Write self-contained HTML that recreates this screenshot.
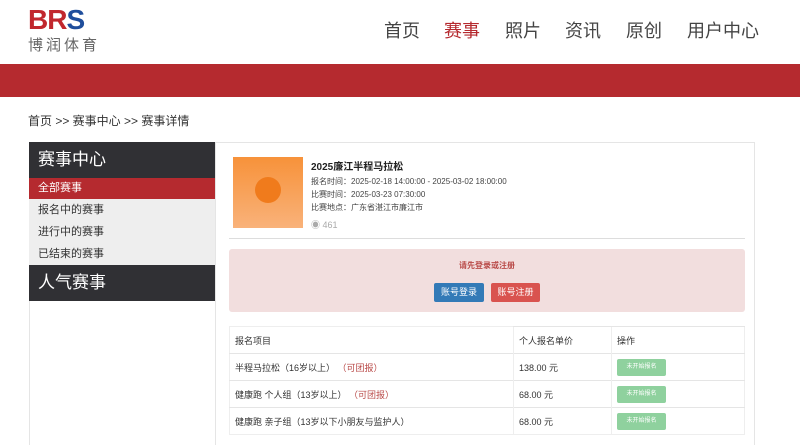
<!DOCTYPE html><html><head><meta charset="utf-8"><style>
*{margin:0;padding:0;box-sizing:border-box}
html{width:800px;height:445px;overflow:hidden}
body{width:800px;height:445px;overflow:hidden;background:#fff;font-family:"Liberation Sans","Noto Sans CJK SC",sans-serif;color:#333;position:relative}
.a{position:absolute}
.nav{font-size:18px;color:#444;top:17px}
.side div{position:absolute;left:29px;width:186px;font-size:11px;padding-left:9px}
td{font-size:9px;height:27px;border-top:1px solid #e5e5e5;padding-left:5px;color:#333}
.g{display:inline-block;background:#8fd19e;color:#fff;font-size:6px;width:49px;height:17px;line-height:17px;text-align:center;border-radius:2px;vertical-align:middle}
.r{color:#b94a48}
</style></head><body>
<div class="a" style="left:28px;top:6px;font-size:28px;font-weight:bold;letter-spacing:-1px;line-height:28px"><span style="color:#c1272d">BR</span><span style="color:#1f4e9c">S</span></div>
<div class="a" style="left:28px;top:34px;font-size:15px;color:#666;letter-spacing:3px">博润体育</div>
<div class="a nav" style="left:384px">首页</div>
<div class="a nav" style="left:444px;color:#b52a2f">赛事</div>
<div class="a nav" style="left:505px">照片</div>
<div class="a nav" style="left:565px">资讯</div>
<div class="a nav" style="left:626px">原创</div>
<div class="a nav" style="left:687px">用户中心</div>
<div class="a" style="left:0;top:64px;width:800px;height:33px;background:#b52a2f"></div>
<div class="a" style="left:28px;top:112px;font-size:12px">首页 &gt;&gt; 赛事中心 &gt;&gt; 赛事详情</div>
<div class="a" style="left:29px;top:142px;width:726px;height:303px;border:1px solid #e5e5e5;border-bottom:0"></div>
<div class="side">
<div style="top:142px;height:36px;background:#303034;color:#fff;font-size:17px;line-height:36px">赛事中心</div>
<div style="top:178px;height:21px;line-height:21px;background:#b52a2f;color:#fff">全部赛事</div>
<div style="top:199px;height:22px;line-height:22px;background:#eee">报名中的赛事</div>
<div style="top:221px;height:22px;line-height:22px;background:#eee">进行中的赛事</div>
<div style="top:243px;height:22px;line-height:22px;background:#eee">已结束的赛事</div>
<div style="top:265px;height:36px;background:#303034;color:#fff;font-size:17px;line-height:36px">人气赛事</div>
</div>
<div class="a" style="left:215px;top:142px;width:1px;height:303px;background:#e5e5e5"></div>
<div class="a" style="left:233px;top:157px;width:70px;height:71px;background:linear-gradient(#f7923a,#f9b27a)"><div class="a" style="left:22px;top:20px;width:26px;height:26px;border-radius:50%;background:#f07b1c"></div></div>
<div class="a" style="left:311px;top:158px;font-size:10px;font-weight:bold;color:#222">2025廉江半程马拉松</div>
<div class="a" style="left:311px;top:175px;font-size:8px;line-height:13px;color:#444">报名时间：2025-02-18 14:00:00 - 2025-03-02 18:00:00<br>比赛时间：2025-03-23 07:30:00<br>比赛地点：广东省湛江市廉江市</div>
<div class="a" style="left:311px;top:218px;font-size:9px;color:#aaa">◉ 461</div>
<div class="a" style="left:229px;top:238px;width:516px;height:1px;background:#ddd"></div>
<div class="a" style="left:229px;top:249px;width:516px;height:63px;background:#f2dede;border-radius:3px"></div>
<div class="a r" style="left:229px;top:260px;width:516px;text-align:center;font-size:8px;font-weight:bold">请先登录或注册</div>
<div class="a" style="left:434px;top:283px;width:50px;height:19px;background:#337ab7;color:#fff;font-size:9px;line-height:19px;text-align:center;border-radius:2px">账号登录</div>
<div class="a" style="left:491px;top:283px;width:49px;height:19px;background:#d9534f;color:#fff;font-size:9px;line-height:19px;text-align:center;border-radius:2px">账号注册</div>
<table class="a" style="left:229px;top:326px;width:516px;border-collapse:collapse;border:1px solid #eee">
<tr><td style="height:21px;width:284px;border-top:0">报名项目</td><td style="width:98px;border-left:1px solid #eee">个人报名单价</td><td style="border-left:1px solid #eee">操作</td></tr>
<tr><td>半程马拉松（16岁以上） <span class="r">（可团报）</span></td><td style="border-left:1px solid #eee">138.00 元</td><td style="border-left:1px solid #eee"><span class="g">未开始报名</span></td></tr>
<tr><td>健康跑 个人组（13岁以上） <span class="r">（可团报）</span></td><td style="border-left:1px solid #eee">68.00 元</td><td style="border-left:1px solid #eee"><span class="g">未开始报名</span></td></tr>
<tr><td>健康跑 亲子组（13岁以下小朋友与监护人）</td><td style="border-left:1px solid #eee">68.00 元</td><td style="border-left:1px solid #eee"><span class="g">未开始报名</span></td></tr>
</table>
</body></html>
